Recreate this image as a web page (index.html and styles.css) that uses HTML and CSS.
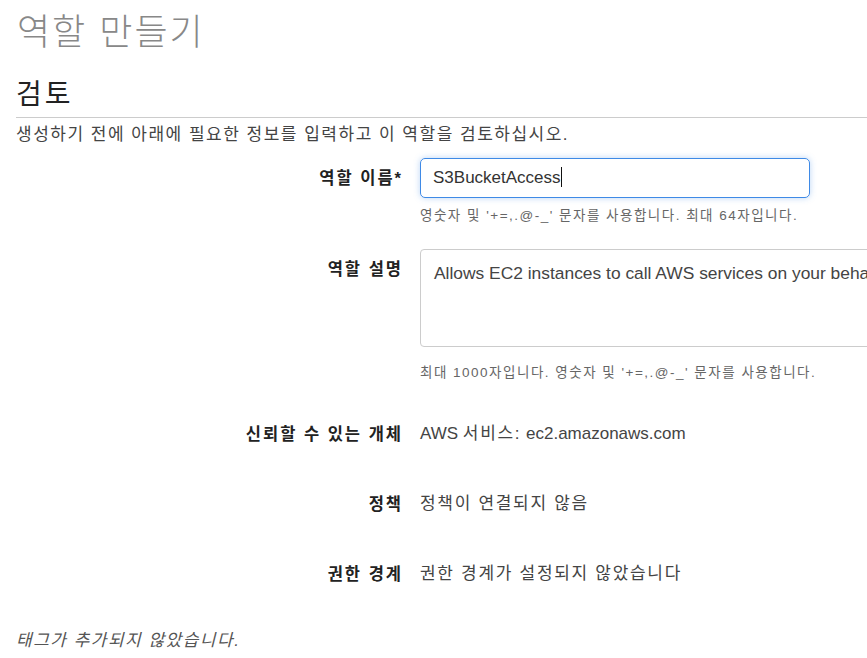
FILE: index.html
```html
<!DOCTYPE html>
<html lang="ko">
<head>
  <meta charset="UTF-8">
  <meta name="viewport" content="width=device-width, initial-scale=1.0">
  <title>역할 만들기</title>
  <link rel="stylesheet" href="styles.css">
</head>
<body>
  <h1 class="page-title">역할 만들기</h1>
  <h2 class="step-title">검토</h2>
  <p class="intro">생성하기 전에 아래에 필요한 정보를 입력하고 이 역할을 검토하십시오.</p>

  <div class="form-row row-name">
    <label class="field-label">역할 이름*</label>
    <div class="field-body">
      <div class="text-field focused">S3BucketAccess<span class="caret"></span></div>
      <p class="hint">영숫자 및 '+=,.@-_' 문자를 사용합니다. 최대 64자입니다.</p>
    </div>
  </div>

  <div class="form-row row-desc">
    <label class="field-label">역할 설명</label>
    <div class="field-body">
      <div class="text-area">Allows EC2 instances to call AWS services on your behalf.</div>
      <p class="hint">최대 1000자입니다. 영숫자 및 '+=,.@-_' 문자를 사용합니다.</p>
    </div>
  </div>

  <div class="form-row row-info">
    <span class="field-label">신뢰할 수 있는 개체</span>
    <span class="field-value">AWS <span class="ko">서비스:</span> ec2.amazonaws.com</span>
  </div>

  <div class="form-row row-info">
    <span class="field-label">정책</span>
    <span class="field-value ko">정책이 연결되지 않음</span>
  </div>

  <div class="form-row row-info">
    <span class="field-label">권한 경계</span>
    <span class="field-value ko">권한 경계가 설정되지 않았습니다</span>
  </div>

  <p class="no-tags">태그가 추가되지 않았습니다.</p>
</body>
</html>
```

FILE: styles.css
```css
html, body {
  overflow: hidden;
}
body {
  font-family: "Liberation Sans", "Noto Sans CJK KR", Arial, sans-serif;
  color: #444;
  background-color: white;
  margin: 0;
  padding: 0 0 0 16px;
}
.page-title {
  font-family: "Noto Sans CJK KR", sans-serif;
  font-size: 36px;
  font-weight: 300;
  color: #888;
  line-height: 44px;
  letter-spacing: 2px;
  margin: 7px 0 0 1px;
}
.step-title {
  font-family: "Noto Sans CJK KR", sans-serif;
  font-size: 28px;
  font-weight: 400;
  color: #222;
  line-height: 36px;
  letter-spacing: 3px;
  margin: 23px 0 0 0;
  padding-bottom: 7px;
  border-bottom: 1px solid #ccc;
}
.intro {
  font-size: 17px;
  color: #444;
  line-height: 24px;
  letter-spacing: 1.5px;
  margin: 5px 0 0 0;
}
.form-row {
  display: grid;
  grid-template-columns: 385px 1fr;
  column-gap: 19px;
  align-items: start;
}
.field-label {
  text-align: right;
  font-weight: bold;
  font-size: 16.5px;
  color: #222;
  line-height: 24px;
  letter-spacing: 2px;
  margin-right: -2px;
}
.row-name {
  margin-top: 11px;
}
.row-name .field-label {
  padding-top: 8px;
}
.text-field {
  width: 364px;
  height: 38px;
  line-height: 38px;
  padding: 0 12px;
  border: 1px solid #3f8ae6;
  border-radius: 5px;
  box-shadow: 0 0 6px rgba(63, 138, 230, 0.35);
  font-size: 17px;
  color: #333;
}
.caret {
  display: inline-block;
  width: 1px;
  height: 20px;
  background-color: #111;
  vertical-align: -4px;
}
.hint {
  font-size: 13.5px;
  color: #666;
  line-height: 18px;
  letter-spacing: 1.5px;
  margin: 9px 0 0 0;
}
.row-desc {
  margin-top: 24px;
}
.row-desc .field-label {
  padding-top: 8px;
}
.text-area {
  width: 620px;
  height: 98px;
  box-sizing: border-box;
  padding: 11px 13px;
  border: 1px solid #ccc;
  border-radius: 4px;
  font-size: 17.4px;
  color: #444;
  line-height: 24px;
  white-space: nowrap;
}
.row-desc .hint {
  margin-top: 17px;
}
.row-info {
  margin-top: 40px;
}
.row-info + .row-info {
  margin-top: 46px;
}
.field-value {
  font-size: 17px;
  color: #444;
  line-height: 24px;
}
.ko {
  letter-spacing: 1.7px;
}
.no-tags {
  font-style: italic;
  font-size: 17px;
  color: #555;
  line-height: 24px;
  letter-spacing: 1.5px;
  margin: 43px 0 0 0;
}
```
